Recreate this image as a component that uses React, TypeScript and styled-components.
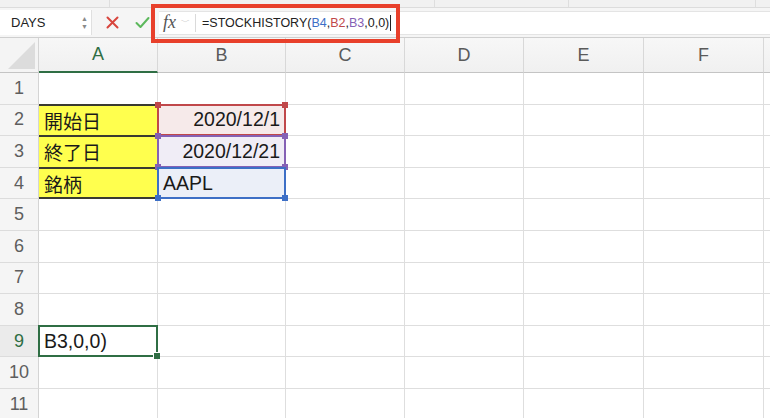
import React from "react";
import styled, { createGlobalStyle, css } from "styled-components";

const GlobalStyle = createGlobalStyle`
  html, body {
    margin: 0;
    padding: 0;
    background: #ffffff;
    overflow: hidden;
  }
  body {
    font-family: "Liberation Sans", "Noto Sans CJK JP", sans-serif;
  }
`;

const Page = styled.div`
  position: relative;
  width: 770px;
  height: 418px;
  overflow: hidden;
`;

const RibbonEdge = styled.div`
  height: 7px;
  background: #f1f1f1;
  border-bottom: 1px solid #dcdcdc;
  display: grid;
  grid-template-columns: 110px 325px 134px 187px 1fr;
`;

const RibbonSlot = styled.div`
  border-right: 1px solid #dedede;
`;

const FormulaBar = styled.div`
  height: 29px;
  background: #f5f5f5;
  display: flex;
  align-items: center;
  border-bottom: 1px solid #cfcfcf;
`;

const NameBox = styled.div`
  width: 92px;
  height: 25px;
  box-sizing: border-box;
  background: #ffffff;
  border-right: 1px solid #e0e0e0;
  display: flex;
  align-items: center;
  justify-content: space-between;
  padding: 0 3px 0 11px;
  font-size: 13px;
  color: #222;
`;

const Spinner = styled.div`
  display: flex;
  flex-direction: column;
  gap: 2px;
  color: #8a8a8a;
  font-size: 7px;
  line-height: 6px;
`;

const ActionIcon = styled.div`
  width: 30px;
  display: flex;
  justify-content: center;
  align-items: center;
`;

const FormulaInput = styled.div`
  flex: 1;
  height: 22px;
  margin-left: 2px;
  background: #ffffff;
  display: flex;
  align-items: center;
  border-top: 1px solid #e4e4e4;
  border-bottom: 1px solid #e4e4e4;
`;

const FxLabel = styled.div`
  display: flex;
  align-items: center;
  gap: 5px;
  padding: 0 5px 0 4px;
  height: 18px;
  border-right: 1px solid #dadada;
  font-family: "Liberation Serif", serif;
  font-style: italic;
  font-size: 18px;
  color: #555;
`;

const Chevron = styled.span`
  font-family: "Liberation Sans", sans-serif;
  font-style: normal;
  font-size: 9px;
  color: #aaa;
`;

const FormulaText = styled.div`
  padding-left: 6px;
  font-size: 12.5px;
  color: #222;
  display: flex;
  align-items: center;
`;

const Ref = styled.span<{ $color: string }>`
  color: ${(p) => p.$color};
`;

const Caret = styled.span`
  display: inline-block;
  width: 1px;
  height: 16px;
  background: #222;
  margin-left: 1px;
`;

const Highlight = styled.div`
  position: absolute;
  left: 151px;
  top: 4px;
  width: 249px;
  height: 39px;
  box-sizing: border-box;
  border: 4px solid #e8402b;
  pointer-events: none;
`;

const Sheet = styled.div`
  display: grid;
  grid-template-columns: 39px 119px 128px 119px 119px 120px 120px 1fr;
  grid-template-rows: 35px repeat(11, 31.6px);
`;

const Corner = styled.div`
  position: relative;
  background: #f4f4f4;
  border-right: 1px solid #d4d4d4;
  border-bottom: 1px solid #c4c4c4;
  overflow: hidden;

  &::after {
    content: "";
    position: absolute;
    right: 3px;
    bottom: 3px;
    width: 0;
    height: 0;
    border-left: 27px solid transparent;
    border-bottom: 27px solid #dcdcdc;
  }
`;

const ColHead = styled.div<{ $active?: boolean }>`
  background: linear-gradient(#f7f7f7, #f0f0f0);
  border-right: 1px solid #d8d8d8;
  border-bottom: 1px solid #c4c4c4;
  display: flex;
  align-items: center;
  justify-content: center;
  font-size: 18px;
  color: #5a5a5a;
  ${(p) =>
    p.$active &&
    css`
      color: #2f6e44;
      border-bottom: 2px solid #2f6e44;
    `}
`;

const RowHead = styled.div<{ $active?: boolean }>`
  background: ${(p) => (p.$active ? "#ebebeb" : "#f5f5f5")};
  border-right: 1px solid #d4d4d4;
  border-bottom: 1px solid #dcdcdc;
  display: flex;
  align-items: center;
  justify-content: center;
  font-size: 18px;
  color: ${(p) => (p.$active ? "#2f6e44" : "#5e5e5e")};
`;

const Cell = styled.div<{ $fill?: string; $right?: boolean }>`
  position: relative;
  box-sizing: border-box;
  border-right: 1px solid #dedede;
  border-bottom: 1px solid #dedede;
  background: ${(p) => p.$fill || "#ffffff"};
  display: flex;
  align-items: center;
  justify-content: ${(p) => (p.$right ? "flex-end" : "flex-start")};
  padding: 0 5px;
  font-size: 19.5px;
  color: #1a1a1a;
  white-space: nowrap;
`;

const LabelCell = styled(Cell)<{ $last?: boolean }>`
  background: #ffff4e;
  border-top: 2px solid #3a3a30;
  margin-top: -1px;
  border-bottom: ${(p) => (p.$last ? "2px solid #3a3a30" : "1px solid #3a3a30")};
  font-size: 19px;
`;

const RangeBox = styled.div<{ $color: string }>`
  position: absolute;
  left: -1px;
  top: -1px;
  right: -1px;
  bottom: -1px;
  border: 2px solid ${(p) => p.$color};
  pointer-events: none;
`;

const Handle = styled.span<{ $color: string; $x: "l" | "r"; $y: "t" | "b" }>`
  position: absolute;
  width: 6px;
  height: 6px;
  background: ${(p) => p.$color};
  ${(p) => (p.$x === "l" ? "left: -4px;" : "right: -4px;")}
  ${(p) => (p.$y === "t" ? "top: -4px;" : "bottom: -4px;")}
  z-index: 2;
`;

const Selected = styled.div`
  position: absolute;
  left: -1px;
  top: -1px;
  right: -1px;
  bottom: -1px;
  border: 2px solid #2f6e44;
  pointer-events: none;

  &::after {
    content: "";
    position: absolute;
    right: -4px;
    bottom: -4px;
    width: 6px;
    height: 6px;
    background: #2f6e44;
    border: 1px solid #fff;
    border-width: 1px 0 0 1px;
  }
`;

const RED = "#c0474a";
const PURPLE = "#8561b5";
const BLUE = "#3d6fc6";

const columns = ["A", "B", "C", "D", "E", "F", ""];

type RangeSpec = { color: string; fill: string; top: boolean; bottom: boolean };

const ranges: Record<number, RangeSpec> = {
  2: { color: RED, fill: "#f6eaea", top: true, bottom: false },
  3: { color: PURPLE, fill: "#f0edf6", top: true, bottom: true },
  4: { color: BLUE, fill: "#ebeff8", top: false, bottom: true },
};

const labels: Record<number, string> = { 2: "開始日", 3: "終了日", 4: "銘柄" };
const values: Record<number, { text: string; right: boolean }> = {
  2: { text: "2020/12/1", right: true },
  3: { text: "2020/12/21", right: true },
  4: { text: "AAPL", right: false },
};

const RangeCell: React.FC<{ row: number }> = ({ row }) => {
  const r = ranges[row];
  const v = values[row];
  return (
    <Cell $fill={r.fill} $right={v.right} style={{ zIndex: row }}>
      {v.text}
      <RangeBox $color={r.color}>
        {r.top && <Handle $color={r.color} $x="l" $y="t" />}
        {r.top && <Handle $color={r.color} $x="r" $y="t" />}
        {r.bottom && <Handle $color={r.color} $x="l" $y="b" />}
        {r.bottom && <Handle $color={r.color} $x="r" $y="b" />}
      </RangeBox>
    </Cell>
  );
};

const App: React.FC = () => {
  const rows = Array.from({ length: 11 }, (_, i) => i + 1);
  return (
    <Page>
      <GlobalStyle />
      <RibbonEdge>
        <RibbonSlot />
        <RibbonSlot />
        <RibbonSlot />
        <RibbonSlot />
        <div />
      </RibbonEdge>
      <FormulaBar>
        <NameBox>
          DAYS
          <Spinner>
            <span>▲</span>
            <span>▼</span>
          </Spinner>
        </NameBox>
        <ActionIcon style={{ marginLeft: 5 }}>
          <svg width="13" height="13" viewBox="0 0 13 13">
            <path d="M1.5 1.5 L11.5 11.5 M11.5 1.5 L1.5 11.5" stroke="#d8453d" strokeWidth="2" strokeLinecap="round" />
          </svg>
        </ActionIcon>
        <ActionIcon>
          <svg width="15" height="13" viewBox="0 0 15 13">
            <path d="M1.5 7 L5.5 11 L13.5 2" stroke="#5cb85c" strokeWidth="2" fill="none" strokeLinecap="round" strokeLinejoin="round" />
          </svg>
        </ActionIcon>
        <FormulaInput>
          <FxLabel>
            fx<Chevron>﹀</Chevron>
          </FxLabel>
          <FormulaText>
            =STOCKHISTORY(<Ref $color={BLUE}>B4</Ref>,<Ref $color={RED}>B2</Ref>,
            <Ref $color={PURPLE}>B3</Ref>,0,0)
            <Caret />
          </FormulaText>
        </FormulaInput>
      </FormulaBar>
      <Sheet>
        <Corner />
        {columns.map((c, i) => (
          <ColHead key={i} $active={c === "A"}>
            {c}
          </ColHead>
        ))}
        {rows.map((row) => (
          <React.Fragment key={row}>
            <RowHead $active={row === 9}>{row}</RowHead>
            {labels[row] ? (
              <LabelCell $last={row === 4}>{labels[row]}</LabelCell>
            ) : (
              <Cell style={row === 9 ? { zIndex: 5 } : undefined}>
                {row === 9 && "B3,0,0)"}
                {row === 9 && <Selected />}
              </Cell>
            )}
            {values[row] ? <RangeCell row={row} /> : <Cell />}
            {columns.slice(2).map((c, i) => (
              <Cell key={i} />
            ))}
          </React.Fragment>
        ))}
      </Sheet>
      <Highlight />
    </Page>
  );
};

export default App;
